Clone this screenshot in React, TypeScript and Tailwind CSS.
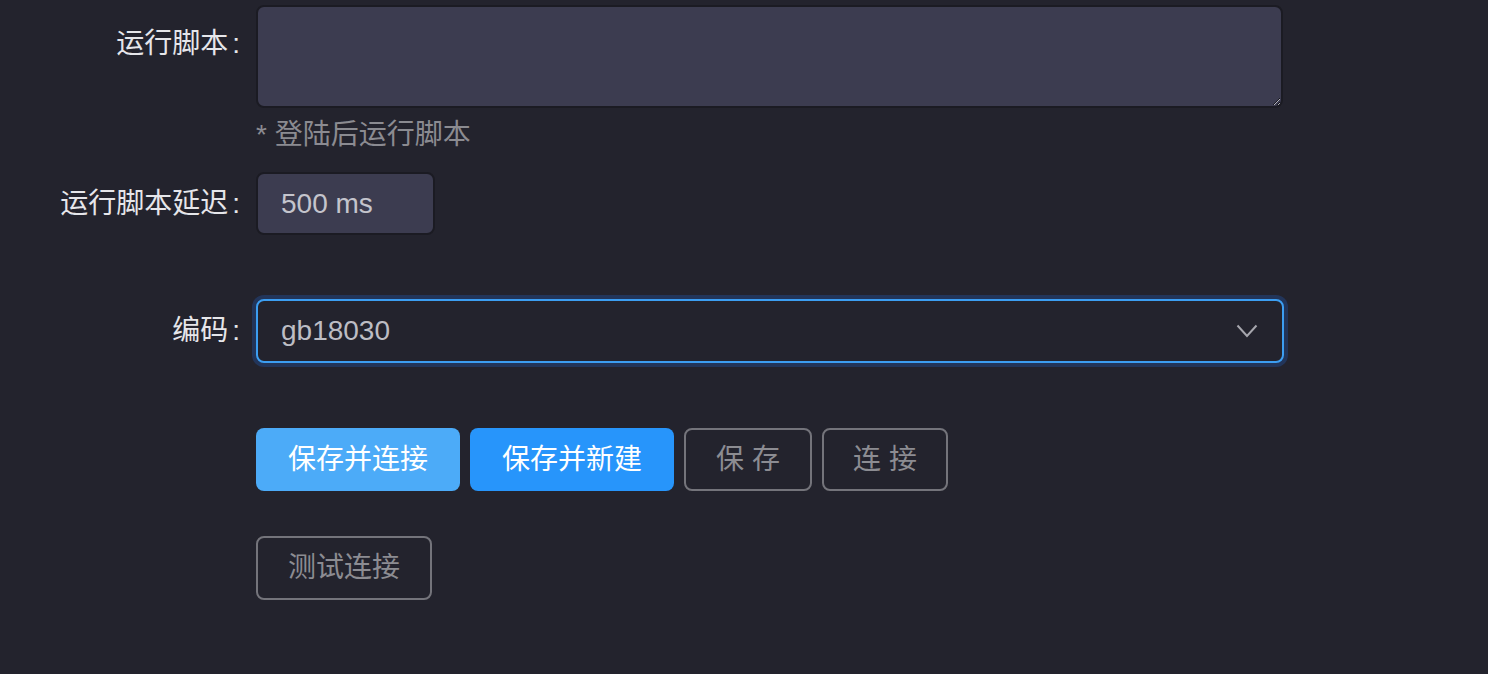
import { useState } from "react";

const font = "font-['Liberation_Sans','Noto_Sans_CJK_SC',sans-serif]";

function Label({ text, className = "" }: { text: string; className?: string }) {
  return (
    <div
      className={`w-[256px] shrink-0 flex justify-end pr-[16px] text-[28px] leading-[40px] text-[#e6e6ea] ${className}`}
    >
      <span>{text}</span>
      <span className="ml-[4px]">:</span>
    </div>
  );
}

export default function App() {
  const [script, setScript] = useState("");
  const [delay, setDelay] = useState("500 ms");

  return (
    <div className={`min-h-[674px] w-full bg-[#23232d] ${font}`}>
      <div className="flex flex-col pt-[5px]">
        {/* run script */}
        <div className="flex items-start">
          <Label text="运行脚本" className="pt-[19px]" />
          <div className="flex flex-col">
            <textarea
              value={script}
              onChange={(e) => setScript(e.target.value)}
              className="w-[1027px] h-[103px] rounded-[8px] border-2 border-[#1b1b23] bg-[#3c3c50] px-[22px] py-[10px] text-[28px] text-[#c4c4cc] outline-none [color-scheme:dark]"
            />
            <div className="mt-[7px] text-[28px] leading-[40px] text-[#8b8b91]">
              * 登陆后运行脚本
            </div>
          </div>
        </div>

        {/* delay */}
        <div className="flex items-center mt-[17px]">
          <Label text="运行脚本延迟" />
          <input
            value={delay}
            onChange={(e) => setDelay(e.target.value)}
            className="w-[179px] h-[63px] rounded-[8px] border-2 border-[#1b1b23] bg-[#3c3c50] px-[23px] text-[28px] text-[#c4c4cc] outline-none"
          />
        </div>

        {/* encoding */}
        <div className="flex items-center mt-[64px]">
          <Label text="编码" />
          <div className="w-[1028px] h-[64px] rounded-[8px] border-2 border-[#3c9ef2] ring-4 ring-[#22355a] bg-[#23232d] flex items-center justify-between pl-[23px] pr-[24px]">
            <span className="text-[28px] text-[#bdbdc4]">gb18030</span>
            <svg width="22" height="14" viewBox="0 0 22 14" fill="none">
              <path
                d="M1.5 1.5 L11 12 L20.5 1.5"
                stroke="#a6a6ad"
                strokeWidth="2"
                strokeLinejoin="miter"
              />
            </svg>
          </div>
        </div>

        {/* actions */}
        <div className="flex mt-[65px] pl-[256px] gap-[10px]">
          <button
            type="button"
            className="h-[63px] w-[204px] rounded-[8px] bg-[#4cabf8] text-[28px] text-white"
          >
            保存并连接
          </button>
          <button
            type="button"
            className="h-[63px] w-[204px] rounded-[8px] bg-[#2795fb] text-[28px] text-white"
          >
            保存并新建
          </button>
          <button
            type="button"
            className="h-[63px] w-[128px] rounded-[8px] border-2 border-[#74747b] text-[28px] text-[#8c8c92]"
          >
            保 存
          </button>
          <button
            type="button"
            className="h-[63px] w-[126px] rounded-[8px] border-2 border-[#74747b] text-[28px] text-[#8c8c92]"
          >
            连 接
          </button>
        </div>

        <div className="flex mt-[45px] pl-[256px]">
          <button
            type="button"
            className="h-[64px] w-[176px] rounded-[8px] border-2 border-[#74747b] text-[28px] text-[#8c8c92]"
          >
            测试连接
          </button>
        </div>
      </div>
    </div>
  );
}
